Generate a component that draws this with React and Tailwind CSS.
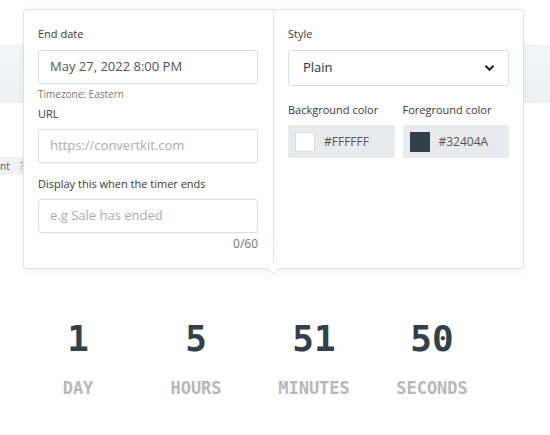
import React from "react";

const sans = { fontFamily: '"Open Sans", "Noto Sans", sans-serif' };
const mono = { fontFamily: '"DejaVu Sans Mono", "Liberation Mono", monospace' };

function Label({ children, className = "" }) {
  return <div className={`text-[11px] leading-[14px] text-[#3a3a3a] ${className}`}>{children}</div>;
}

function Input({ value, placeholder }) {
  return (
    <div className="h-[34px] border border-[#dcdfe3] rounded-[3px] bg-white flex items-center px-[11px] text-[13px] shadow-[0_1px_1px_rgba(0,0,0,0.04)]">
      {value ? <span className="text-[#555]">{value}</span> : <span className="text-[#a9adb2]">{placeholder}</span>}
    </div>
  );
}

function ColorBox({ color, hex, border }) {
  return (
    <div className="h-[33px] flex-1 bg-[#e8ebee] rounded-[2px] flex items-center px-[7px] gap-[9px]">
      <div className={`w-[20px] h-[20px] ${border ? "border border-[#dde0e3]" : ""}`} style={{ background: color }} />
      <span className="text-[12px] text-[#555]">{hex}</span>
    </div>
  );
}

export default function App() {
  const units = [
    ["1", "DAY"],
    ["5", "HOURS"],
    ["51", "MINUTES"],
    ["50", "SECONDS"],
  ];
  return (
    <div className="relative w-[550px] h-[435px] bg-white overflow-hidden" style={sans}>
      {/* background page */}
      <div className="pt-[45px]">
        <div className="h-[58px] bg-gradient-to-b from-[#f4f5f6] to-[#eeeff1] border-t border-[#eceef0]" />
        <div className="mt-[54px] h-[18px] w-[40px] bg-[#f1f2f3] flex items-center gap-[10px] pl-0 text-[10px] text-[#555]">
          <span>nt</span>
          <span className="text-[#888]">?</span>
        </div>
      </div>

      {/* countdown */}
      <div className="flex pl-[19px] pt-[144px]">
        {units.map(([n, l]) => (
          <div key={l} className="w-[118px] flex flex-col items-center" style={mono}>
            <div className="text-[36px] leading-[40px] font-bold text-[#32404A]">{n}</div>
            <div className="mt-[19px] text-[17px] leading-[20px] font-bold text-[#b7b8ba]">{l}</div>
          </div>
        ))}
      </div>

      {/* popover */}
      <div className="absolute left-[23px] top-[9px] w-[501px] h-[260px] bg-white border border-[#dfe1e4] rounded-[3px] shadow-[0_2px_6px_rgba(0,0,0,0.06)] flex">
        <div className="w-[250px] border-r border-[#e3e5e8] pl-[14px] pr-[15px] pt-[17px]">
          <Label>End date</Label>
          <div className="mt-[9px]"><Input value="May 27, 2022 8:00 PM" /></div>
          <div className="mt-[4px] text-[10px] leading-[13px] text-[#777]">Timezone: Eastern</div>
          <Label className="mt-[6px]">URL</Label>
          <div className="mt-[8px]"><Input placeholder="https://convertkit.com" /></div>
          <Label className="mt-[14px]">Display this when the timer ends</Label>
          <div className="mt-[8px]"><Input placeholder="e.g Sale has ended" /></div>
          <div className="mt-[3px] text-right text-[12px] leading-[16px] text-[#777]">0/60</div>
        </div>
        <div className="flex-1 pl-[14px] pr-[14px] pt-[17px]">
          <Label>Style</Label>
          <div className="mt-[9px] h-[36px] border border-[#dcdfe3] rounded-[3px] flex items-center justify-between px-[14px] text-[13px] text-[#333]">
            <span>Plain</span>
            <svg width="11" height="8" viewBox="0 0 11 8" className="mr-[-1px]">
              <path d="M1.5 1.8 L5.5 5.8 L9.5 1.8" fill="none" stroke="#222" strokeWidth="2" />
            </svg>
          </div>
          <div className="mt-[17px] flex gap-[8px]">
            <div className="flex-1">
              <Label>Background color</Label>
              <div className="mt-[8px] flex"><ColorBox color="#FFFFFF" hex="#FFFFFF" border /></div>
            </div>
            <div className="flex-1">
              <Label>Foreground color</Label>
              <div className="mt-[8px] flex"><ColorBox color="#32404A" hex="#32404A" /></div>
            </div>
          </div>
        </div>
        <div className="absolute left-[245px] bottom-[-5px] w-[9px] h-[9px] bg-white border-r border-b border-[#dfe1e4] rotate-45" />
      </div>
    </div>
  );
}
